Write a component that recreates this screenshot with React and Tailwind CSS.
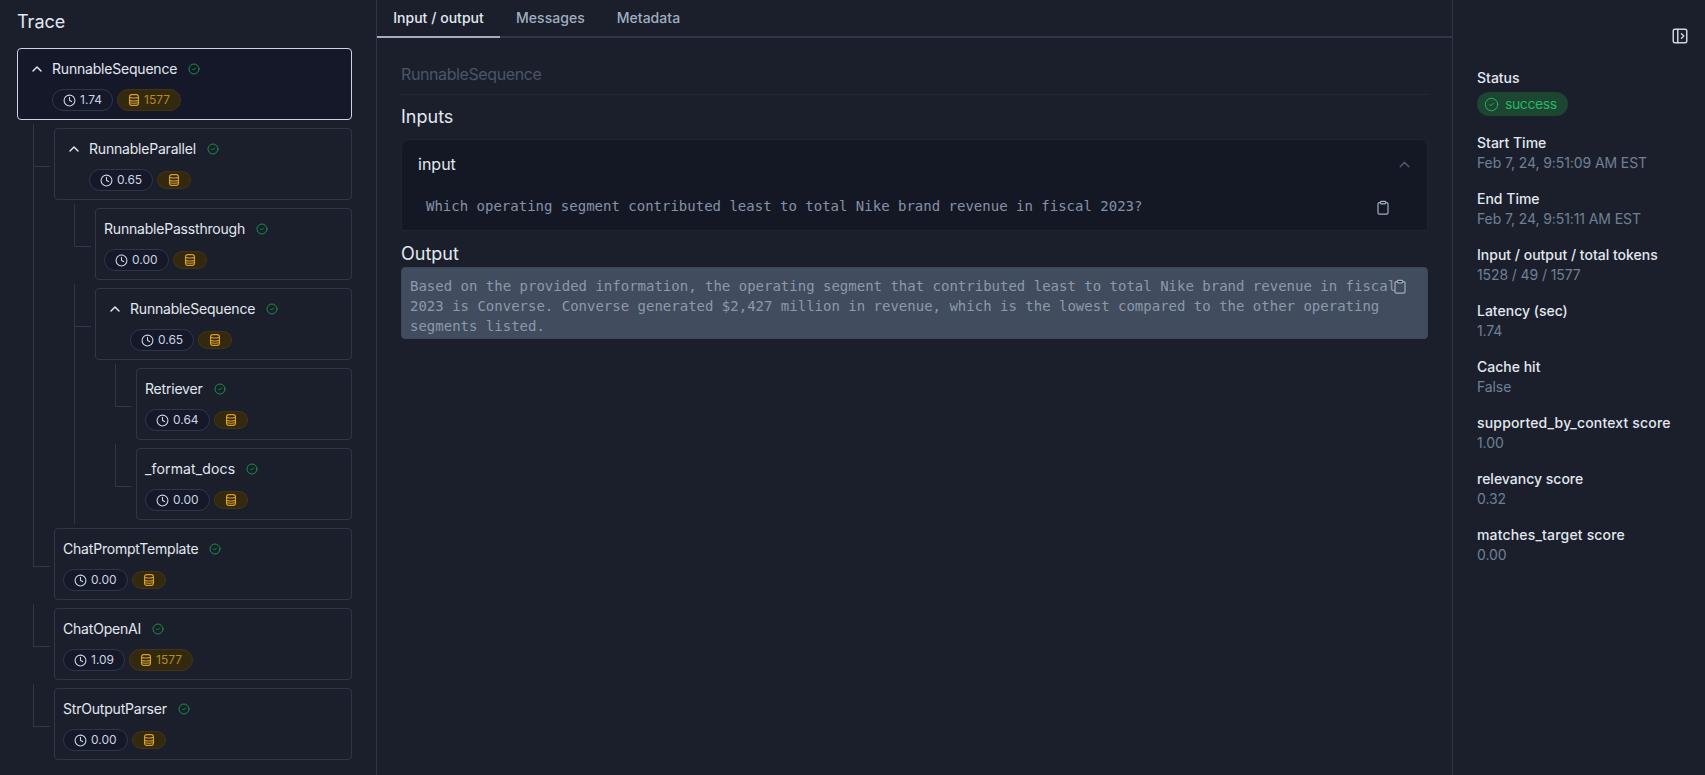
import React from 'react';
import { ChevronUp, CircleCheck, Clock, PanelLeftOpen } from 'lucide-react';

const trace = {
  name: 'RunnableSequence', time: '1.74', tokens: '1577', selected: true,
  children: [
    {
      name: 'RunnableParallel', time: '0.65',
      children: [
        { name: 'RunnablePassthrough', time: '0.00' },
        {
          name: 'RunnableSequence', time: '0.65',
          children: [
            { name: 'Retriever', time: '0.64' },
            { name: '_format_docs', time: '0.00' },
          ],
        },
      ],
    },
    { name: 'ChatPromptTemplate', time: '0.00' },
    { name: 'ChatOpenAI', time: '1.09', tokens: '1577' },
    { name: 'StrOutputParser', time: '0.00' },
  ],
};

const details = [
  ['Start Time', 'Feb 7, 24, 9:51:09 AM EST'],
  ['End Time', 'Feb 7, 24, 9:51:11 AM EST'],
  ['Input / output / total tokens', '1528 / 49 / 1577'],
  ['Latency (sec)', '1.74'],
  ['Cache hit', 'False'],
  ['supported_by_context score', '1.00'],
  ['relevancy score', '0.32'],
  ['matches_target score', '0.00'],
];

const DbIcon = () => (
  <svg width="12" height="12" viewBox="0 0 12 12" fill="none" stroke="#d69e2e" strokeWidth="1.1">
    <rect x="1.5" y="0.6" width="9" height="10.8" rx="2.4" />
    <path d="M1.5 3.2c1.5 1 7.5 1 9 0M1.5 6.2c1.5 1 7.5 1 9 0M1.5 8.8c1.5 .6 7.5 .6 9 0" />
  </svg>
);

const CopyIcon = ({ className }) => (
  <svg className={className} width="16" height="16" viewBox="0 0 16 16" fill="none" stroke="#a0aec0" strokeWidth="1.2">
    <rect x="3" y="2.6" width="10" height="11.6" rx="1.4" />
    <rect x="5.4" y="1.4" width="5.2" height="2.4" rx="0.8" fill="#1a1f2b" />
  </svg>
);

const TraceCard = ({ node }) => (
  <div className={`rounded border h-[72px] px-2 py-2 ${node.selected ? 'border-[#cbd5e0] bg-[#141829]' : 'border-[#2d3748]'}`}>
    <div className="flex items-center h-6 text-sm text-[#e2e8f0]">
      {node.children && <ChevronUp size={16} color="#edf2f7" className="ml-[3px] mr-[7px]" />}
      <span className={node.name.includes('_') ? 'tracking-[0.15px]' : 'tracking-[-0.2px]'}>{node.name}</span>
      <CircleCheck size={12} color="#16a34a" strokeWidth={1.7} className="ml-[11px]" />
    </div>
    <div className={`flex items-center gap-1 mt-2 ${node.children ? 'ml-[26px]' : ''}`}>
      <div className="flex items-center gap-1 rounded-full border border-[#2d3748] bg-[#141829] px-2.5 py-[2px] text-xs leading-4 text-[#cbd5e0]">
        <Clock size={13} color="#cbd5e0" />
        <span>{node.time}</span>
      </div>
      <div className="flex items-center gap-1 rounded-full border border-[#423412] bg-[#33290f] px-2.5 py-[2px] text-xs leading-4 text-[#b7891e]">
        <DbIcon />
        {node.tokens && <span>{node.tokens}</span>}
      </div>
    </div>
  </div>
);

const TraceNode = ({ node, depth = 0 }) => (
  <div className="relative flex flex-col gap-2">
    {depth > 0 && (
      <>
        <div className="absolute left-[-21px] top-[-4px] h-[43px] w-[17px] border-l border-b border-[#2d3748]" />
        {node.children && <div className="absolute left-[-21px] top-[-4px] bottom-[-4px] border-l border-[#2d3748]" />}
      </>
    )}
    <TraceCard node={node} />
    {node.children && (
      <div className={`flex flex-col gap-2 ${depth === 0 ? 'pl-[37px]' : 'pl-[41px]'}`}>
        {node.children.map((child, i) => (
          <TraceNode key={i} node={child} depth={depth + 1} />
        ))}
      </div>
    )}
  </div>
);

export default function App() {
  return (
    <div className="flex h-screen overflow-hidden bg-[#1a1f2b] text-[#e2e8f0] font-['Inter',sans-serif]">
      <aside className="w-[377px] shrink-0 border-r border-[#2d3748] pl-[17px] pr-[24px]">
        <h2 className="text-lg leading-6 mt-[10px] mb-[14px]">Trace</h2>
        <TraceNode node={trace} />
      </aside>

      <main className="flex-1 min-w-0 flex flex-col">
        <div className="flex h-[38px] border-b-2 border-[#2d3748] text-sm font-medium tracking-[0.03px] text-[#a0aec0]">
          <div className="h-[38px] w-[123px] text-center pt-[8px] border-b-2 border-[#a0aec0] text-[#e2e8f0]">Input / output</div>
          <div className="h-[38px] px-4 pt-[8px]">Messages</div>
          <div className="h-[38px] px-4 pt-[8px]">Metadata</div>
        </div>

        <div className="px-6 pt-6">
          <div className="h-[33px] border-b border-[#222836] text-base leading-6 tracking-[-0.4px] text-[#4a5568]">RunnableSequence</div>
          <h3 className="text-lg leading-6 mt-[10px]">Inputs</h3>

          <div className="mt-[10px] h-[92px] rounded-t-lg border border-[#1e2430] bg-[#141824] relative">
            <div className="flex items-center justify-between pl-4 pr-[14px] h-12">
              <span className="text-base">input</span>
              <ChevronUp size={17} color="#4a5568" />
            </div>
            <p className="pl-6 mt-[8px] font-['DejaVu_Sans_Mono',monospace] text-sm leading-5 text-[#8492a6]">
              Which operating segment contributed least to total Nike brand revenue in fiscal 2023?
            </p>
            <CopyIcon className="absolute right-[36px] top-[60px]" />
          </div>

          <h3 className="text-lg leading-6 mt-[11px] mb-[1px]">Output</h3>
          <div className="relative rounded border border-[#3d495b] bg-[#414c5e] px-2 pt-[8px] pb-[2px] font-['DejaVu_Sans_Mono',monospace] text-sm leading-5 text-[#8d99ab]">
            <p className="max-w-[1000px]">
              Based on the provided information, the operating segment that contributed least to total Nike brand revenue in fiscal 2023 is Converse. Converse generated $2,427 million in revenue, which is the lowest compared to the other operating segments listed.
            </p>
            <CopyIcon className="absolute right-[19px] top-[11px]" />
          </div>
        </div>
      </main>

      <aside className="w-[253px] shrink-0 border-l border-[#2d3748] pl-6 pr-[16px] text-sm leading-5">
        <div className="flex justify-end pt-[27px] h-[68px]">
          <PanelLeftOpen size={18} color="#cbd5e0" />
        </div>
        <div className="font-medium">Status</div>
        <div className="mt-1 mb-[17px] inline-flex h-6 items-center gap-1.5 rounded-full bg-[#1c4532] pl-[7px] pr-[11px] tracking-[-0.4px] text-[#25b865] align-top">
          <CircleCheck size={15} strokeWidth={1.5} />
          <span>success</span>
        </div>
        <div className="flex flex-col gap-4">
          {details.map(([label, value]) => (
            <div key={label}>
              <div className={`font-medium ${label.includes('_') ? 'tracking-[0.17px]' : ''}`}>{label}</div>
              <div className="tracking-[-0.1px] text-[#718096]">{value}</div>
            </div>
          ))}
        </div>
      </aside>
    </div>
  );
}
